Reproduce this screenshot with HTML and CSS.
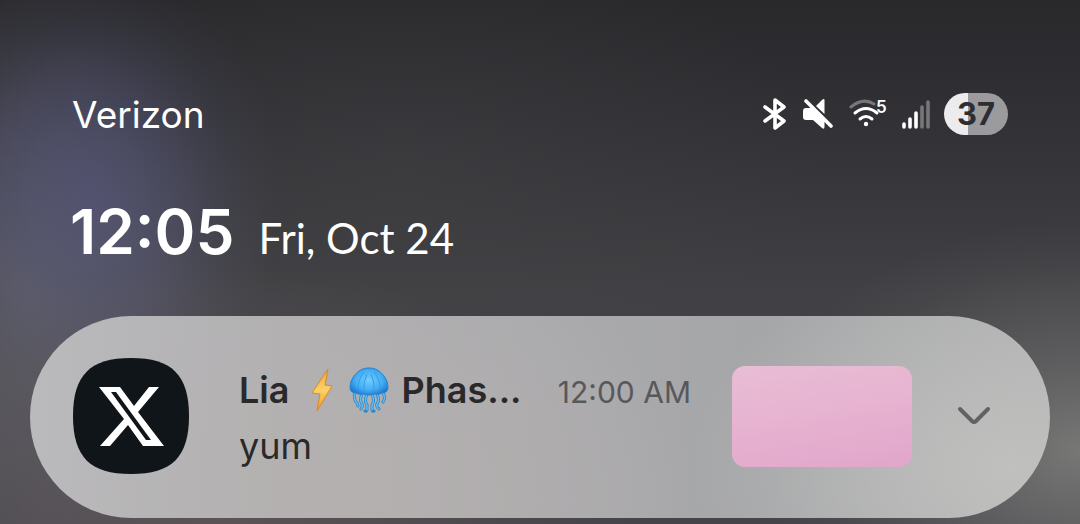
FILE: index.html
```
<!DOCTYPE html>
<html lang="en">
<head>
    <meta charset="UTF-8">
    <meta name="viewport" content="width=device-width, initial-scale=1.0">
    <title>Notifications</title>
    <link rel="stylesheet" href="styles.css">
</head>
<body>
    <header class="status-bar">
        <span class="carrier">Verizon</span>
        <div class="status-icons">
            <svg class="bluetooth" width="24" height="32" viewBox="0 0 24 32" aria-label="Bluetooth">
                <path d="M2 9L21 23L12 30V2L21 9L2 23" fill="none" stroke="#fff" stroke-width="3.6" stroke-linejoin="round" stroke-linecap="round"/>
            </svg>
            <svg class="mute" width="30" height="32" viewBox="0 0 30 32" aria-label="Muted">
                <path d="M21.500 2.500V16L13 8L19 2Q21.500 0 21.500 2.500Z" fill="#fff"/>
                <path d="M3 10H9L21.500 22V28.500Q21.500 32 19 30L10 22H3Q0 22 0 19V13Q0 10 3 10Z" fill="#fff"/>
                <path d="M3 3L28 28" stroke="#fff" stroke-width="3.6" stroke-linecap="round"/>
            </svg>
            <svg class="wifi" width="38" height="32" viewBox="0 0 38 32" aria-label="Wi-Fi 5">
                <path d="M2 9Q14 -1 25 6" fill="none" stroke="#77777b" stroke-width="3" stroke-linecap="round"/>
                <path d="M6 15Q17 6 28 15M11 21Q17 16 23 21" fill="none" stroke="#fff" stroke-width="3" stroke-linecap="round"/>
                <circle cx="17" cy="26" r="2.200" fill="#fff"/>
                <text x="27" y="15" class="wifi-number">5</text>
            </svg>
            <svg class="signal" width="28" height="32" viewBox="0 0 28 32" aria-label="Signal">
                <path d="M2 26V29M8 21V29M14 15V29" stroke="#fff" stroke-width="3.6" stroke-linecap="round"/>
                <path d="M20 9V29M26 4V29" stroke="#77777a" stroke-width="3.6" stroke-linecap="round"/>
            </svg>
            <span class="battery">37</span>
        </div>
    </header>

    <div class="clock">
        <time class="clock-time">12:05</time>
        <span class="clock-date">Fri, Oct 24</span>
    </div>

    <main class="notification">
        <svg class="app-icon" width="116" height="116" viewBox="0 0 116 116" aria-label="X">
            <path d="M58 0C99 0 116 17 116 58S99 116 58 116S0 99 0 58S17 0 58 0Z" fill="#0f1519"/>
            <path d="M26 29H47L61 48L76 29H86L65 54L91 88H70L55 67L37 88H27L51 61Z" fill="#fff"/>
            <path d="M38 34H43L78 82H73Z" fill="#0f1519"/>
        </svg>
        <div class="message">
            <div class="message-top">
                <h1 class="sender">
                    <span>Lia</span>
                    <svg class="bolt" width="22" height="44" viewBox="0 0 22 44" aria-label="lightning">
                        <defs>
                            <linearGradient id="gold" x1="0" y1="0" x2="0" y2="1">
                                <stop offset="0" stop-color="#f3a531"/>
                                <stop offset="0.5" stop-color="#fbd169"/>
                                <stop offset="1" stop-color="#ee9b20"/>
                            </linearGradient>
                        </defs>
                        <path d="M17 1L1 25L9 26L6 43L21 18L14 17Z" fill="url(#gold)" stroke="#d98a24" stroke-width="1" stroke-linejoin="round"/>
                    </svg>
                    <svg class="jellyfish" width="40" height="46" viewBox="0 0 40 46" aria-label="jellyfish">
                        <defs>
                            <radialGradient id="bell" cx="0.5" cy="0.45" r="0.6">
                                <stop offset="0" stop-color="#70ceff"/>
                                <stop offset="0.6" stop-color="#45adf4"/>
                                <stop offset="1" stop-color="#1877cf"/>
                            </radialGradient>
                        </defs>
                        <g fill="none" stroke-linecap="round">
                            <path d="M6 26Q4 32 8 36L9 39M13 27Q10 33 13 37Q14 40 12 42M18 27Q15 34 18 38V43Q17 45 16 44M23 27Q26 34 23 38V43Q24 45 25 44M28 27Q31 33 28 37Q27 40 30 42M34 26Q37 31 34 35" stroke="#2a84c8" stroke-width="3"/>
                            <path d="M6 26Q4 32 8 36L9 39M13 27Q10 33 13 37Q14 40 12 42M18 27Q15 34 18 38V43M23 27Q26 34 23 38V43M28 27Q31 33 28 37Q27 40 30 42M34 26Q37 31 34 35" stroke="#62bcf0" stroke-width="1.500"/>
                        </g>
                        <path d="M20 1C13 1 9 4 5 9Q1 14 1 20Q1 26 7 26Q10 28 14 27Q20 29 26 27Q30 28 33 26Q39 26 39 20Q39 14 35 9C31 4 27 1 20 1Z" fill="url(#bell)" stroke="#2784d2"/>
                        <path d="M15 5Q9 12 9 22M18 7Q14 15 15 24M22 7Q26 15 25 24M25 5Q31 12 31 22" fill="none" stroke="#369be5" stroke-width="1"/>
                    </svg>
                    <span>Phas...</span>
                </h1>
                <time class="sent-at">12:00 AM</time>
            </div>
            <p class="body-text">yum</p>
        </div>
        <div class="thumbnail"></div>
        <button class="expand" type="button" aria-label="Expand">
            <svg width="34" height="20" viewBox="0 0 34 20">
                <path d="M3 3L15 15Q17 17 19 15L31 3" fill="none" stroke="#626264" stroke-width="4" stroke-linecap="round"/>
            </svg>
        </button>
    </main>
</body>
</html>
```
FILE: styles.css
```
* { box-sizing: border-box; }
body {
    margin: 0;
    min-height: 100vh;
    padding: 90px 30px 6px;
    overflow-x: hidden;
    color: #fff;
    font-family: Inter, "Noto Sans", sans-serif;
    background:
        radial-gradient(ellipse 190px 230px at 90px 190px, rgba(88, 88, 140, 0.5), rgba(88, 88, 140, 0.3) 40%, rgba(88, 88, 140, 0.08) 75%, transparent),
        radial-gradient(ellipse 240px 330px at 30px 290px, rgba(108, 108, 118, 0.6), rgba(108, 108, 118, 0.35) 45%, rgba(108, 108, 118, 0.08) 80%, transparent),
        radial-gradient(ellipse 320px 230px at 100% 450px, rgba(132, 132, 129, 0.8), rgba(132, 132, 129, 0.4) 40%, rgba(132, 132, 129, 0.08) 80%, transparent),
        radial-gradient(ellipse 420px 260px at 220px 100%, rgba(108, 94, 94, 0.6), rgba(108, 94, 94, 0.3) 50%, transparent),
        radial-gradient(ellipse 420px 220px at 400px 160px, rgba(72, 72, 72, 0.35), transparent),
        linear-gradient(#29292c, #313136 24%, #414145 56%, #44444a);
}
h1, p { margin: 0; }

.status-bar { display: flex; align-items: center; justify-content: space-between; height: 48px; padding: 0 42px; }
.carrier { font-size: 37px; }
.status-icons { display: flex; align-items: center; gap: 16px; }
.wifi-number { fill: #fff; font-size: 17px; font-weight: 600; }
.signal { margin-right: -2px; }
.wifi { margin-right: -1px; }
.battery {
    width: 64px;
    border-radius: 21px;
    background: linear-gradient(90deg, #ececee 37%, #9b9b9d 37%);
    color: #2e2e32;
    font-size: 31px;
    font-weight: 700;
    line-height: 42px;
    text-align: center;
}

.clock { display: flex; align-items: baseline; gap: 24px; height: 80px; margin-top: 54px; padding-left: 40px; line-height: 80px; }
.clock-time { font-size: 62px; font-weight: 600; }
.clock-date { font-family: Lato, sans-serif; font-size: 42px; }

.notification {
    display: flex;
    align-items: center;
    margin-top: 44px;
    padding: 42px 59px 44px 43px;
    border-radius: 101px;
    color: #29292b;
    background:
        radial-gradient(ellipse 320px 220px at 96% 75%, rgba(196, 196, 194, 0.8), rgba(196, 196, 194, 0.4) 50%, transparent),
        radial-gradient(ellipse 320px 240px at 34% 90%, rgba(184, 177, 175, 0.6), rgba(184, 177, 175, 0.3) 60%, transparent),
        linear-gradient(90deg, #bababc, #b1b0b2 25%, #a9a9ac 55%, #a5a6a8 72%, #b0b1b1);
}
.app-icon { flex: none; }
.message { flex: 1; min-width: 0; margin: 4px 41px 0 50px; }
.message-top { display: flex; align-items: baseline; justify-content: space-between; }
.sender { display: flex; align-items: center; font-size: 36px; font-weight: 600; line-height: 56px; white-space: nowrap; }
.bolt { margin: 0 16px 0 22px; }
.jellyfish { margin-right: 12px; }
.sent-at { color: #58585b; font-size: 30px; white-space: nowrap; }
.body-text { font-size: 36px; line-height: 56px; }
.thumbnail { flex: none; width: 180px; height: 101px; border-radius: 13px; background: linear-gradient(170deg, #e9bdd5, #e6b2d0 50%, #e1a6cb); }
.expand { flex: none; display: flex; margin-left: 45px; padding: 0; border: 0; background: none; cursor: pointer; }
```
